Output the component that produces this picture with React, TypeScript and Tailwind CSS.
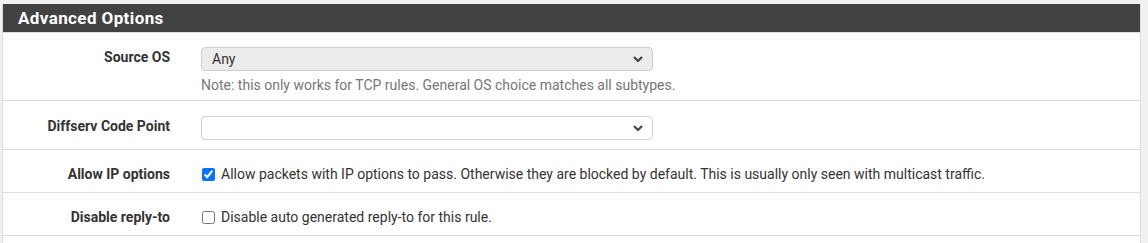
import { ReactNode } from "react";

const font = { fontFamily: "Roboto, 'Liberation Sans', sans-serif" };

function Chevron() {
  return (
    <svg width="10" height="7" viewBox="0 0 10 7" className="absolute right-[9px] top-1/2 -translate-y-1/2">
      <path d="M1 1.5 L5 5.5 L9 1.5" fill="none" stroke="#444" strokeWidth="2.2" />
    </svg>
  );
}

function Select({ value, gray }: { value: string; gray?: boolean }) {
  return (
    <div
      className={`relative h-[24px] w-[452px] rounded-[4px] border border-[#cfcfcf] ${
        gray ? "bg-[#ececec]" : "bg-white"
      }`}
    >
      <div className="pl-[10px] text-[14px] leading-[22px] text-[#333]">{value}</div>
      <Chevron />
    </div>
  );
}

function Row({
  label,
  className,
  children,
}: {
  label: string;
  className: string;
  children: ReactNode;
}) {
  return (
    <div className={`flex border-b border-[#dedede] ${className}`}>
      <div className="w-[167px] shrink-0 text-right text-[14px] font-bold text-[#333]">{label}</div>
      <div className="ml-[31px] flex-1">{children}</div>
    </div>
  );
}

function Check({ checked, text }: { checked?: boolean; text: string }) {
  return (
    <label className="flex items-center gap-[6px] text-[14px] text-[#333]">
      <input type="checkbox" defaultChecked={checked} className="ml-[1px] h-[13px] w-[13px]" />
      <span>{text}</span>
    </label>
  );
}

export default function App() {
  return (
    <div className="h-[243px] w-[1148px] overflow-hidden bg-[#f1f1f1] pt-[4px] pl-[2px]" style={font}>
      <div className="w-[1139px] border-x border-[#dcdcdc] bg-white">
        <div className="h-[28px] bg-[#424242] pl-[15px] text-[17px] font-bold leading-[29px] tracking-[0.4px] text-white">
          Advanced Options
        </div>
        <div className="h-px bg-[#dedede]" />
        <Row label="Source OS" className="h-[68px] pt-[14px]">
          <Select value="Any" gray />
          <div className="mt-[4px] text-[14px] text-[#777]">
            Note: this only works for TCP rules. General OS choice matches all subtypes.
          </div>
        </Row>
        <Row label="Diffserv Code Point" className="h-[49px] pt-[15px]">
          <Select value="" />
        </Row>
        <Row label="Allow IP options" className="h-[43px] items-center pt-[6px]">
          <Check
            checked
            text="Allow packets with IP options to pass. Otherwise they are blocked by default. This is usually only seen with multicast traffic."
          />
        </Row>
        <Row label="Disable reply-to" className="h-[43px] items-center pt-[6px]">
          <Check text="Disable auto generated reply-to for this rule." />
        </Row>
        <div className="h-[20px]" />
      </div>
    </div>
  );
}
